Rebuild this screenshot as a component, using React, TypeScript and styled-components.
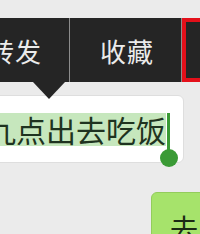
import React from 'react';
import styled, { createGlobalStyle } from 'styled-components';

const GlobalStyle = createGlobalStyle`
  html, body {
    margin: 0;
    padding: 0;
    background: #ebebeb;
  }
  body {
    font-family: "Noto Sans CJK SC", "Noto Sans", sans-serif;
  }
`;

const Stage = styled.div`
  width: 200px;
  height: 234px;
  overflow: hidden;
  padding-top: 18px;
  box-sizing: border-box;
  background: #ebebeb;
`;

const MenuBar = styled.div`
  position: relative;
  display: flex;
  height: 64px;
  margin-left: -42px;
  width: max-content;
  background: #252525;
`;

interface IMenuItem {
  $marked?: boolean;
}

const MenuItem = styled.div<IMenuItem>`
  width: 112px;
  display: flex;
  align-items: center;
  justify-content: center;
  padding-left: ${(props) => (props.$marked ? '0' : '3px')};
  color: #ebebeb;
  font-size: 26px;
  letter-spacing: 1px;
  border-right: 1px solid #8c8c8c;
  box-sizing: border-box;
  box-shadow: ${(props) => (props.$marked ? 'inset 0 0 0 4px #e3101a' : 'none')};
`;

const Arrow = styled.div`
  position: absolute;
  top: 100%;
  left: 75px;
  width: 0;
  height: 0;
  border-left: 16px solid transparent;
  border-right: 16px solid transparent;
  border-top: 17px solid #252525;
  z-index: 2;
`;

const Bubble = styled.div`
  margin-top: 13px;
  margin-left: -30px;
  width: 214px;
  height: 68px;
  box-sizing: border-box;
  padding: 17px 0 0 15px;
  background: #ffffff;
  border: 1px solid #dedede;
  border-radius: 6px;
`;

const Line = styled.div`
  display: flex;
  align-items: flex-start;
  font-size: 30px;
  line-height: 33px;
  color: #1f3320;
  white-space: nowrap;
`;

const Selected = styled.span`
  background: #c6e7bd;
`;

const Handle = styled.span`
  position: relative;
  width: 3px;
  height: 33px;
`;

const HandleBar = styled.span`
  position: absolute;
  left: 1px;
  top: 0;
  width: 3px;
  height: 40px;
  background: #3a9a35;
`;

const HandleKnob = styled.span`
  position: absolute;
  left: -6px;
  top: 36px;
  width: 18px;
  height: 18px;
  border-radius: 50%;
  background: #3a9a35;
`;

const OwnBubble = styled.div`
  margin-top: 29px;
  margin-left: 151px;
  width: 80px;
  height: 60px;
  box-sizing: border-box;
  padding: 19px 0 0 18px;
  background: #a6e36b;
  border: 1px solid #93cc5c;
  border-radius: 6px;
  font-size: 28px;
  line-height: 33px;
  color: #1a2a14;
`;

export default function App() {
  return (
    <>
      <GlobalStyle />
      <Stage>
        <MenuBar>
          <MenuItem>转发</MenuItem>
          <MenuItem>收藏</MenuItem>
          <MenuItem $marked>删除</MenuItem>
          <Arrow />
        </MenuBar>
        <Bubble>
          <Line>
            <Selected>九点出去吃饭</Selected>
            <Handle>
              <HandleBar />
              <HandleKnob />
            </Handle>
          </Line>
        </Bubble>
        <OwnBubble>去</OwnBubble>
      </Stage>
    </>
  );
}
